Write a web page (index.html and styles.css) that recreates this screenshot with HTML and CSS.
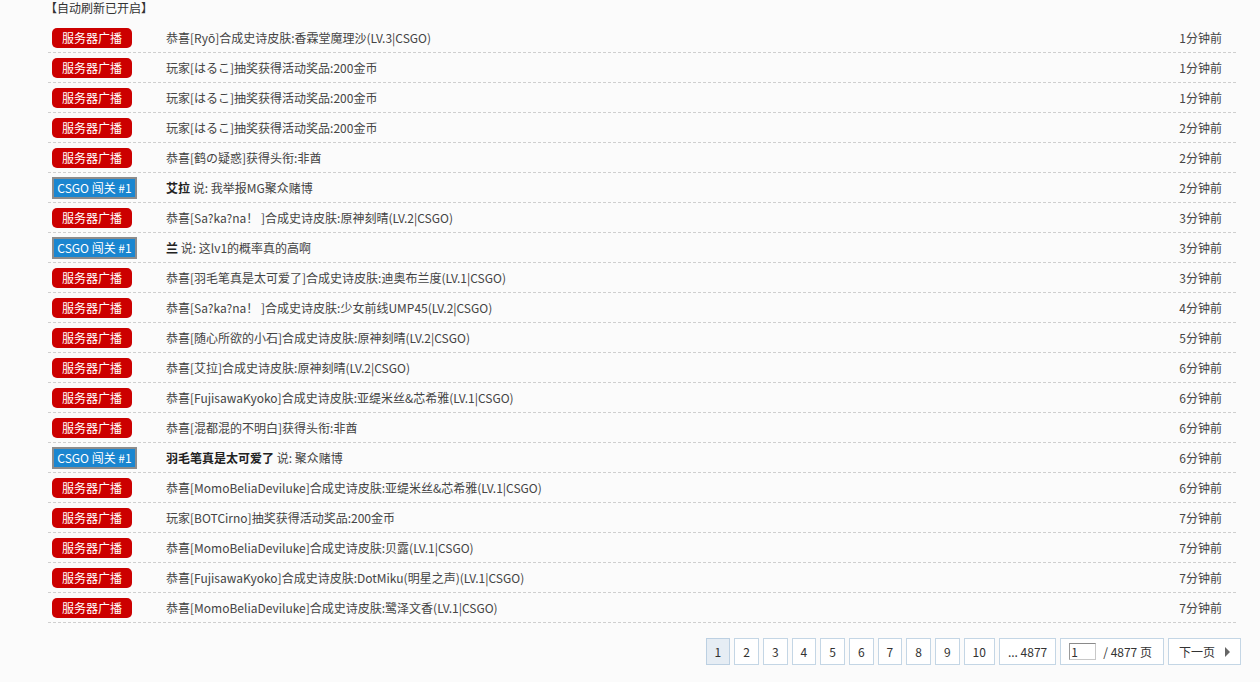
FILE: index.html
```html
<!DOCTYPE html>
<html lang="zh-CN">
<head>
<meta charset="utf-8">
<title>服务器广播</title>
<link rel="stylesheet" href="styles.css">
</head>
<body>
<div class="status">【自动刷新已开启】</div>
<div class="list">
  <div class="row"><span class="cell-tag"><span class="tag red">服务器广播</span></span><span class="msg">恭喜[Ryō]合成史诗皮肤:香霖堂魔理沙(LV.3|CSGO)</span><span class="time">1分钟前</span></div>
  <div class="row"><span class="cell-tag"><span class="tag red">服务器广播</span></span><span class="msg">玩家[はるこ]抽奖获得活动奖品:200金币</span><span class="time">1分钟前</span></div>
  <div class="row"><span class="cell-tag"><span class="tag red">服务器广播</span></span><span class="msg">玩家[はるこ]抽奖获得活动奖品:200金币</span><span class="time">1分钟前</span></div>
  <div class="row"><span class="cell-tag"><span class="tag red">服务器广播</span></span><span class="msg">玩家[はるこ]抽奖获得活动奖品:200金币</span><span class="time">2分钟前</span></div>
  <div class="row"><span class="cell-tag"><span class="tag red">服务器广播</span></span><span class="msg">恭喜[鹤の疑惑]获得头衔:非酋</span><span class="time">2分钟前</span></div>
  <div class="row"><span class="cell-tag"><span class="tag blue">CSGO 闯关 #1</span></span><span class="msg"><b>艾拉</b> 说: 我举报MG聚众赌博</span><span class="time">2分钟前</span></div>
  <div class="row"><span class="cell-tag"><span class="tag red">服务器广播</span></span><span class="msg">恭喜[Sa?ka?na！ ]合成史诗皮肤:原神刻晴(LV.2|CSGO)</span><span class="time">3分钟前</span></div>
  <div class="row"><span class="cell-tag"><span class="tag blue">CSGO 闯关 #1</span></span><span class="msg"><b>兰</b> 说: 这lv1的概率真的高啊</span><span class="time">3分钟前</span></div>
  <div class="row"><span class="cell-tag"><span class="tag red">服务器广播</span></span><span class="msg">恭喜[羽毛笔真是太可爱了]合成史诗皮肤:迪奥布兰度(LV.1|CSGO)</span><span class="time">3分钟前</span></div>
  <div class="row"><span class="cell-tag"><span class="tag red">服务器广播</span></span><span class="msg">恭喜[Sa?ka?na！ ]合成史诗皮肤:少女前线UMP45(LV.2|CSGO)</span><span class="time">4分钟前</span></div>
  <div class="row"><span class="cell-tag"><span class="tag red">服务器广播</span></span><span class="msg">恭喜[随心所欲的小石]合成史诗皮肤:原神刻晴(LV.2|CSGO)</span><span class="time">5分钟前</span></div>
  <div class="row"><span class="cell-tag"><span class="tag red">服务器广播</span></span><span class="msg">恭喜[艾拉]合成史诗皮肤:原神刻晴(LV.2|CSGO)</span><span class="time">6分钟前</span></div>
  <div class="row"><span class="cell-tag"><span class="tag red">服务器广播</span></span><span class="msg">恭喜[FujisawaKyoko]合成史诗皮肤:亚缇米丝&amp;芯希雅(LV.1|CSGO)</span><span class="time">6分钟前</span></div>
  <div class="row"><span class="cell-tag"><span class="tag red">服务器广播</span></span><span class="msg">恭喜[混都混的不明白]获得头衔:非酋</span><span class="time">6分钟前</span></div>
  <div class="row"><span class="cell-tag"><span class="tag blue">CSGO 闯关 #1</span></span><span class="msg"><b>羽毛笔真是太可爱了</b> 说: 聚众赌博</span><span class="time">6分钟前</span></div>
  <div class="row"><span class="cell-tag"><span class="tag red">服务器广播</span></span><span class="msg">恭喜[MomoBeliaDeviluke]合成史诗皮肤:亚缇米丝&amp;芯希雅(LV.1|CSGO)</span><span class="time">6分钟前</span></div>
  <div class="row"><span class="cell-tag"><span class="tag red">服务器广播</span></span><span class="msg">玩家[BOTCirno]抽奖获得活动奖品:200金币</span><span class="time">7分钟前</span></div>
  <div class="row"><span class="cell-tag"><span class="tag red">服务器广播</span></span><span class="msg">恭喜[MomoBeliaDeviluke]合成史诗皮肤:贝露(LV.1|CSGO)</span><span class="time">7分钟前</span></div>
  <div class="row"><span class="cell-tag"><span class="tag red">服务器广播</span></span><span class="msg">恭喜[FujisawaKyoko]合成史诗皮肤:DotMiku(明星之声)(LV.1|CSGO)</span><span class="time">7分钟前</span></div>
  <div class="row"><span class="cell-tag"><span class="tag red">服务器广播</span></span><span class="msg">恭喜[MomoBeliaDeviluke]合成史诗皮肤:鹭泽文香(LV.1|CSGO)</span><span class="time">7分钟前</span></div>
</div>
<div class="pager">
  <span class="pg current">1</span>
  <a class="pg">2</a>
  <a class="pg">3</a>
  <a class="pg">4</a>
  <a class="pg">5</a>
  <a class="pg">6</a>
  <a class="pg">7</a>
  <a class="pg">8</a>
  <a class="pg">9</a>
  <a class="pg">10</a>
  <a class="pg">... 4877</a>
  <label class="pg jump"><input class="jump-input" type="text" value="1"><span class="jump-total">/ 4877 页</span></label>
  <a class="pg next">下一页<span class="arrow"></span></a>
</div>
</body>
</html>
```
FILE: styles.css
```css
html, body {
  margin: 0;
  padding: 0;
  background: #fbfbfb;
}
body {
  font-family: "Noto Sans CJK SC", "Noto Sans", sans-serif;
  font-size: 12px;
  color: #444;
}
.status {
  height: 23px;
  line-height: 15px;
  padding-left: 45px;
  color: #333;
}
.list {
  margin: 0 24px 0 48px;
}
.row {
  display: grid;
  grid-template-columns: 118px 1fr auto;
  align-items: center;
  height: 29px;
  border-bottom: 1px dashed #cfcfcf;
}
.cell-tag {
  padding-left: 4px;
  display: flex;
  align-items: center;
}
.tag {
  display: inline-flex;
  align-items: center;
  justify-content: center;
  color: #fff;
  font-size: 12px;
  white-space: nowrap;
}
.tag.red {
  width: 80px;
  height: 20px;
  background: #cc0000;
  border-radius: 5px;
}
.tag.blue {
  width: 81px;
  height: 18px;
  background: #1a86d0;
  border: 2px solid #8c8c8c;
}
.msg {
  color: #444;
  white-space: nowrap;
}
.msg b {
  color: #222;
  font-weight: bold;
}
.time {
  padding-right: 14px;
  color: #444;
}
.pager {
  display: flex;
  justify-content: flex-end;
  gap: 4px;
  margin: 15px 19px 0 0;
}
.pg {
  display: inline-flex;
  align-items: center;
  height: 25px;
  padding: 0 8px;
  border: 1px solid #c4d6e5;
  background: #fff;
  color: #333;
  font-size: 12px;
  text-decoration: none;
}
.pg.current {
  background: #e6edf4;
  border-color: #bcd0e2;
}
.pg.jump {
  padding: 0 9px 0 8px;
}
.jump-input {
  width: 23px;
  height: 13px;
  padding: 1px 1px;
  margin: 0 7px 0 0;
  border: 1px solid #c8c8c8;
  border-top-color: #8a8a8a;
  border-left-color: #9a9a9a;
  font-family: inherit;
  font-size: 12px;
  color: #333;
}
.jump-total {
  padding-right: 2px;
}
.pg.next {
  padding: 0 10px 0 10px;
}
.arrow {
  display: inline-block;
  width: 0;
  height: 0;
  margin-left: 10px;
  border-top: 5px solid transparent;
  border-bottom: 5px solid transparent;
  border-left: 5px solid #666;
}
```
